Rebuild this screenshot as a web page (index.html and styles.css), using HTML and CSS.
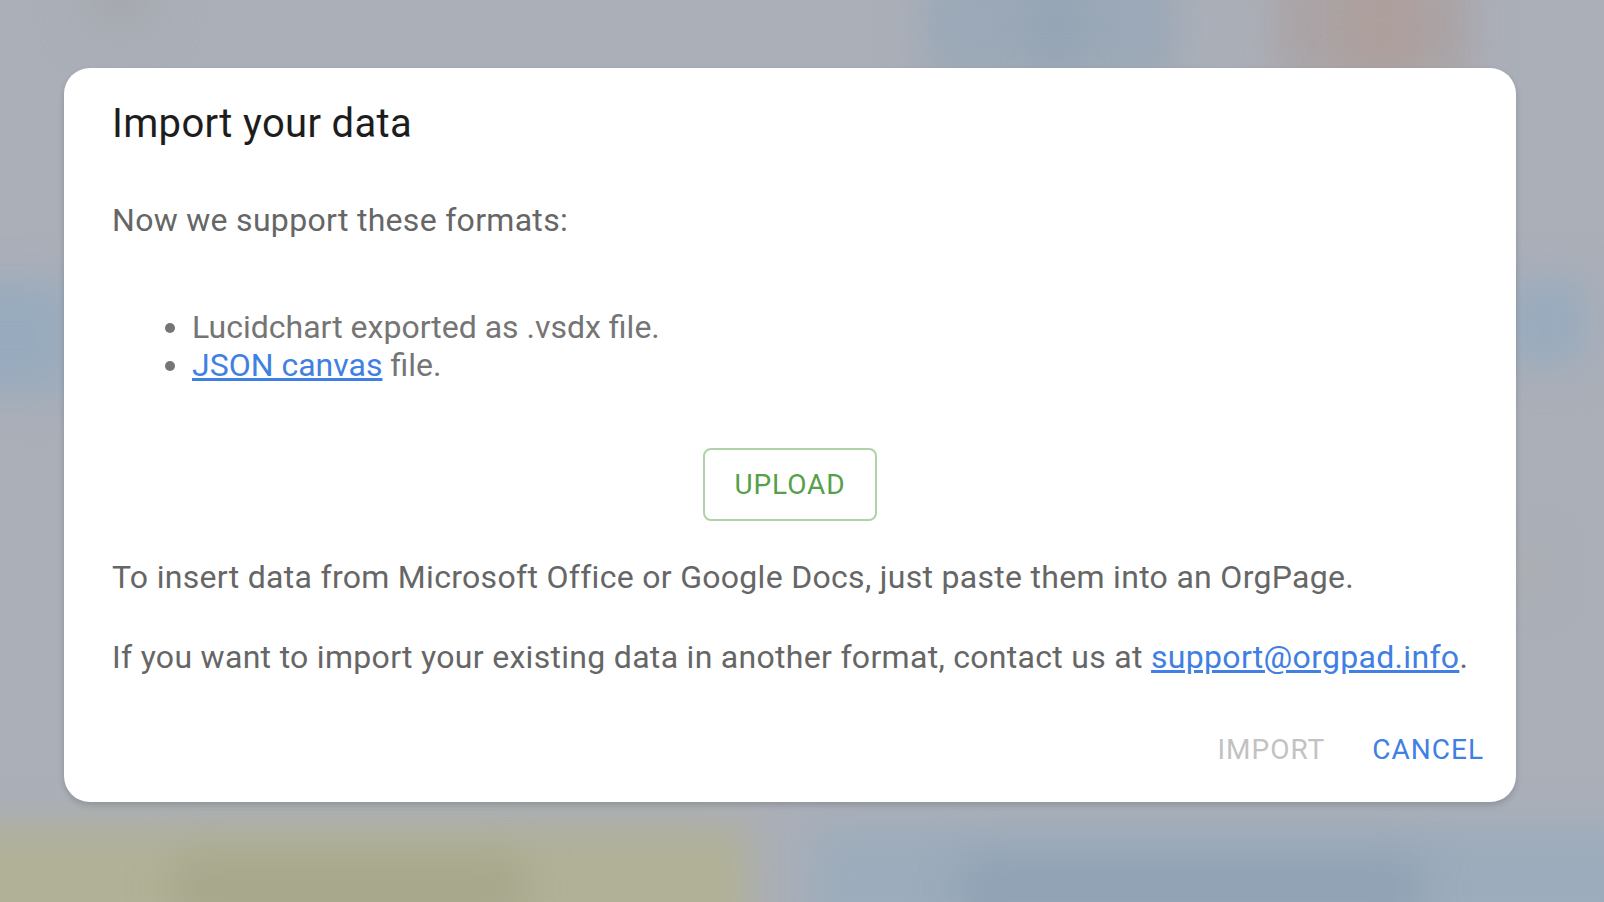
FILE: index.html
```html
<!DOCTYPE html>
<html lang="en">
<head>
<meta charset="utf-8">
<title>Import your data</title>
<link rel="stylesheet" href="styles.css">
</head>
<body>
<div class="backdrop" aria-hidden="true">
  <div class="blob blob-gray"></div>
  <div class="blob blob-top-blue"></div>
  <div class="blob blob-top-blue-core"></div>
  <div class="blob blob-pink"></div>
  <div class="blob blob-pink-core"></div>
  <div class="blob blob-left"></div>
  <div class="blob blob-right"></div>
  <div class="blob blob-green"></div>
  <div class="blob blob-olive"></div>
  <div class="blob blob-olive-core"></div>
  <div class="blob blob-bottom-blue"></div>
  <div class="blob blob-bottom-core"></div>
</div>
<main class="dialog">
  <h1 class="title">Import your data</h1>
  <p class="lead">Now we support these formats:</p>
  <ul class="formats">
    <li>Lucidchart exported as .vsdx file.</li>
    <li><a href="#">JSON canvas</a> file.</li>
  </ul>
  <div class="upload-row"><button class="upload" type="button">UPLOAD</button></div>
  <p class="note">To insert data from Microsoft Office or Google Docs, just paste them into an OrgPage.</p>
  <p class="note note-last">If you want to import your existing data in another format, contact us at <a href="#">support@orgpad.info</a>.</p>
  <div class="actions">
    <button class="action action-disabled" type="button">IMPORT</button>
    <button class="action action-primary" type="button">CANCEL</button>
  </div>
</main>
</body>
</html>
```
FILE: styles.css
```css
html, body {
  margin: 0;
  height: 902px;
  overflow: hidden;
}
body {
  position: relative;
  background: #abafb8;
  font-family: Roboto, "Liberation Sans", sans-serif;
  padding: 68px 88px 0 64px;
  box-sizing: border-box;
}
.backdrop {
  position: absolute;
  inset: 0;
  overflow: hidden;
}
.blob {
  position: absolute;
  filter: blur(20px);
}
.blob-gray { left: 85px; top: -30px; width: 70px; height: 60px; background: #a5a9ae; }
.blob-top-blue { left: 925px; top: -30px; width: 250px; height: 110px; background: #9aa8b7; }
.blob-top-blue-core { left: 1045px; top: -30px; width: 22px; height: 110px; background: #90a2b4; }
.blob-pink { left: 1275px; top: -30px; width: 195px; height: 110px; background: #aaa3a5; }
.blob-pink-core { left: 1345px; top: -30px; width: 75px; height: 100px; background: #ae9f9c; }
.blob-left { left: -50px; top: 280px; width: 125px; height: 115px; background: #98abbe; }
.blob-right { left: 1505px; top: 280px; width: 80px; height: 85px; background: #98abbe; }
.blob-green { left: 1510px; top: 550px; width: 30px; height: 40px; background: #adb0ae; }
.blob-olive { left: -50px; top: 825px; width: 800px; height: 120px; background: #b1b197; }
.blob-olive-core { left: 175px; top: 858px; width: 350px; height: 60px; background: #a5a68a; }
.blob-bottom-blue { left: 810px; top: 825px; width: 840px; height: 120px; background: #9cacbc; }
.blob-bottom-core { left: 960px; top: 858px; width: 460px; height: 60px; background: #8fa1b3; }
.dialog {
  position: relative;
  width: 1452px;
  height: 734px;
  box-sizing: border-box;
  padding: 31px 33px 0 48px;
  background: #fff;
  border-radius: 26px;
  box-shadow: 0 3px 6px rgba(0, 0, 0, .16);
  color: #666;
  font-size: 32px;
}
.title {
  margin: 0;
  font-size: 40px;
  font-weight: 400;
  line-height: 50px;
  letter-spacing: .32px;
  color: #1d1d1d;
}
.lead, .note {
  margin: 0;
  font-size: 32px;
  line-height: 40px;
  letter-spacing: .3px;
}
.lead { margin-top: 51px; }
.formats {
  margin: 68px 0 0;
  padding: 0 0 0 80px;
  color: #757575;
  font-size: 32px;
  line-height: 38.4px;
}
a { color: #3f80e2; }
.upload-row {
  display: flex;
  justify-content: center;
  margin: 63px 0 0;
  padding-right: 15px;
}
.upload {
  width: 174px;
  height: 73px;
  box-sizing: border-box;
  border: 2px solid #b0d2a8;
  border-radius: 8px;
  background: #fff;
  color: #56a04a;
  font: 400 28px Roboto, sans-serif;
  letter-spacing: .9px;
}
.note { margin-top: 36px; }
.note-last { margin-top: 40px; }
.actions {
  display: flex;
  justify-content: flex-end;
  gap: 47px;
  margin: 53px -1px 0 0;
}
.action {
  border: 0;
  padding: 0;
  background: none;
  font: 400 28px/40px Roboto, sans-serif;
  letter-spacing: 1px;
}
.action-disabled { color: #c2c2c2; }
.action-primary { color: #3f80e2; }
```
